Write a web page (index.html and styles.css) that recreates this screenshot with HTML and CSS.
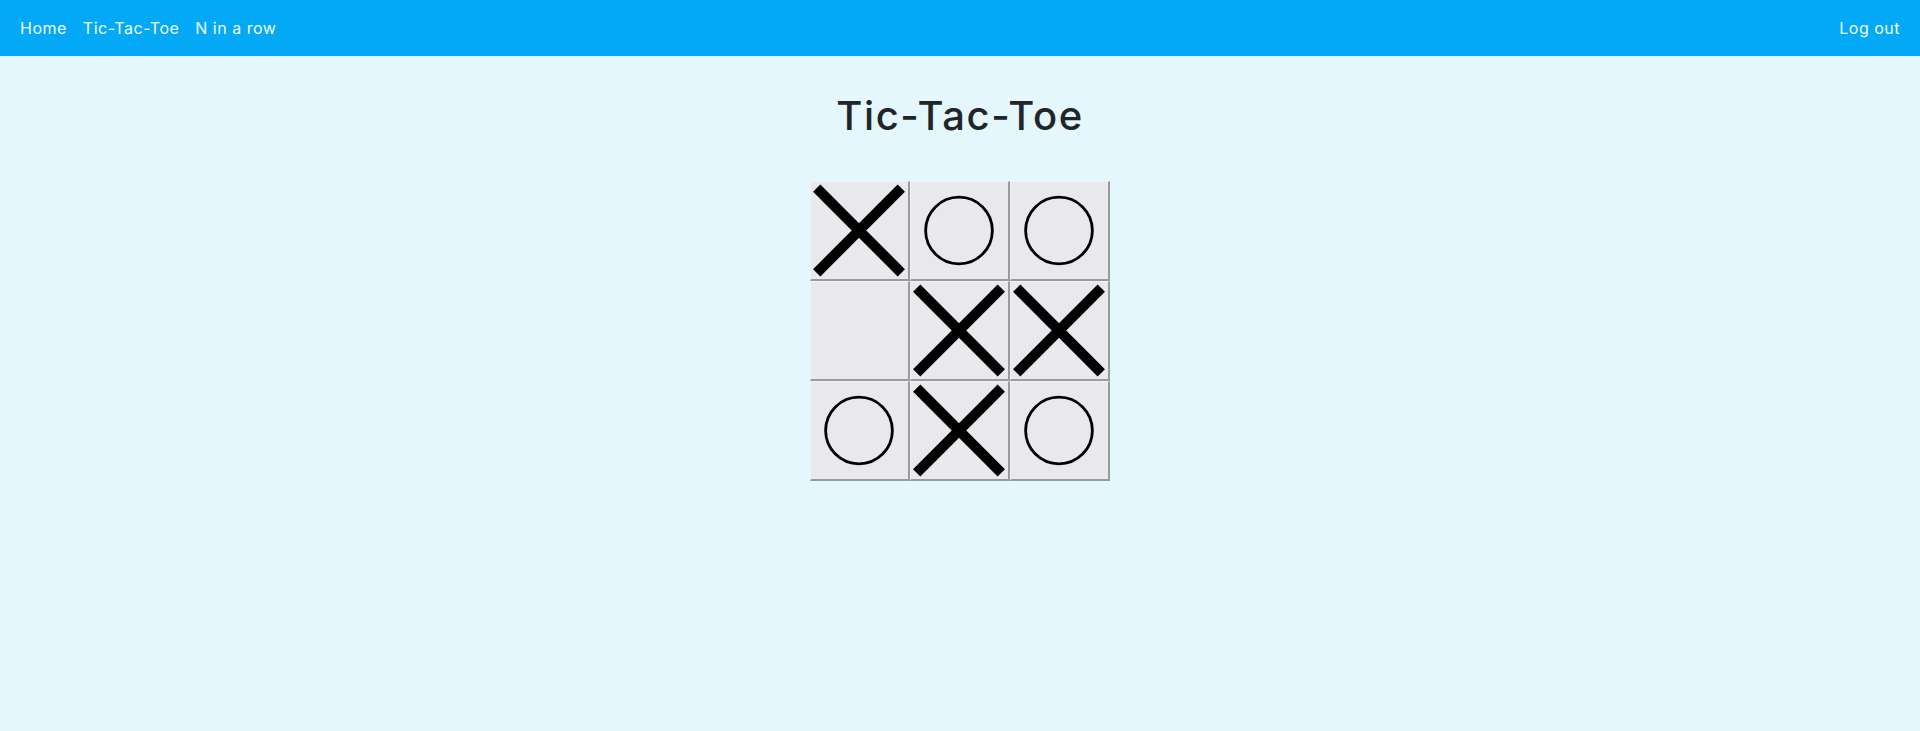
FILE: index.html
```html
<!DOCTYPE html>
<html lang="en">
<head>
<meta charset="utf-8">
<title>Tic-Tac-Toe</title>
<link rel="stylesheet" href="styles.css">
</head>
<body>
<nav class="navbar">
  <div class="nav-left">
    <a class="nav-link" href="#">Home</a>
    <a class="nav-link" href="#">Tic-Tac-Toe</a>
    <a class="nav-link" href="#">N in a row</a>
  </div>
  <div class="nav-right">
    <a class="nav-link" href="#">Log out</a>
  </div>
</nav>
<main class="main">
  <h1 class="title">Tic-Tac-Toe</h1>
  <div class="board">
    <button class="cell"><svg class="mark" viewBox="0 0 100 100"><line x1="5" y1="5" x2="95" y2="95"/><line x1="95" y1="5" x2="5" y2="95"/></svg></button>
    <button class="cell"><svg class="mark" viewBox="0 0 100 100"><circle cx="50" cy="50" r="35.5"/></svg></button>
    <button class="cell"><svg class="mark" viewBox="0 0 100 100"><circle cx="50" cy="50" r="35.5"/></svg></button>
    <button class="cell"></button>
    <button class="cell"><svg class="mark" viewBox="0 0 100 100"><line x1="5" y1="5" x2="95" y2="95"/><line x1="95" y1="5" x2="5" y2="95"/></svg></button>
    <button class="cell"><svg class="mark" viewBox="0 0 100 100"><line x1="5" y1="5" x2="95" y2="95"/><line x1="95" y1="5" x2="5" y2="95"/></svg></button>
    <button class="cell"><svg class="mark" viewBox="0 0 100 100"><circle cx="50" cy="50" r="35.5"/></svg></button>
    <button class="cell"><svg class="mark" viewBox="0 0 100 100"><line x1="5" y1="5" x2="95" y2="95"/><line x1="95" y1="5" x2="5" y2="95"/></svg></button>
    <button class="cell"><svg class="mark" viewBox="0 0 100 100"><circle cx="50" cy="50" r="35.5"/></svg></button>
  </div>
</main>
</body>
</html>
```
FILE: styles.css
```css
html, body {
  margin: 0;
  padding: 0;
}
body {
  background: #e3f7fd;
  font-family: "Inter", "Noto Sans", sans-serif;
  color: #212529;
  min-height: 731px;
}
.navbar {
  display: flex;
  justify-content: space-between;
  align-items: center;
  height: 56px;
  padding: 0 12px;
  background: #03a9f4;
  box-sizing: border-box;
}
.nav-left, .nav-right {
  display: flex;
}
.nav-link {
  padding: 8px 8px;
  color: #f2fbff;
  text-decoration: none;
  font-size: 16px;
  letter-spacing: 0.5px;
  font-weight: 400;
}
.main {
  display: flex;
  flex-direction: column;
  align-items: center;
}
.title {
  margin: 36px 0 0;
  font-size: 40px;
  font-weight: 500;
  line-height: 48px;
  letter-spacing: 1.6px;
}
.board {
  margin-top: 41px;
  display: grid;
  grid-template-columns: repeat(3, 100px);
  grid-template-rows: repeat(3, 100px);
}
.cell {
  box-sizing: border-box;
  width: 100px;
  height: 100px;
  margin: 0;
  padding: 1px 2px 2px 1px;
  background: #e9e9ed;
  border-style: solid;
  border-width: 1px 2px 2px 1px;
  border-color: #f2f2f4 #9a9a9a #9a9a9a #f2f2f4;
  display: flex;
  align-items: center;
  justify-content: center;
}
.mark {
  width: 97px;
  height: 97px;
  display: block;
}
.mark line {
  stroke: #000;
  stroke-width: 11;
}
.mark circle {
  fill: none;
  stroke: #000;
  stroke-width: 3;
}
```
